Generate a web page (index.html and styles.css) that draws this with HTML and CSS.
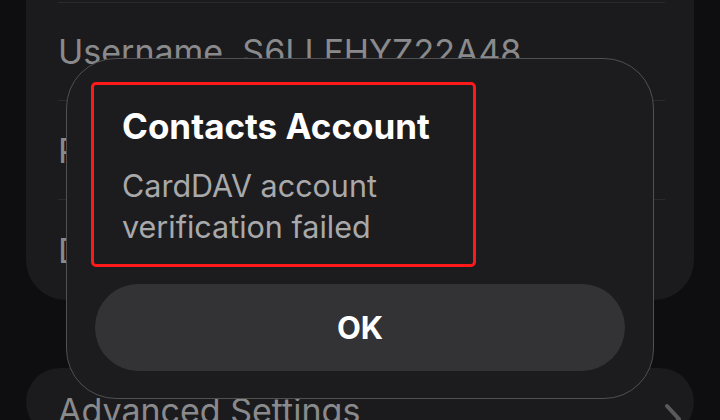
FILE: index.html
```html
<!DOCTYPE html>
<html lang="en">
<head>
<meta charset="utf-8">
<title>Contacts Account</title>
<link rel="stylesheet" href="styles.css">
</head>
<body>
<div class="screen">
  <section class="card card-top">
    <div class="row row-hidden"></div>
    <div class="row"><span class="label">Username&nbsp;&nbsp;S6LLFHYZ22A48</span></div>
    <div class="row"><span class="label">Password</span></div>
    <div class="row"><span class="label">Description</span></div>
  </section>
  <section class="card card-bottom">
    <div class="row row-link">
      <span class="label">Advanced Settings</span>
      <svg class="chevron" width="20" height="34" viewBox="0 0 20 34"><path d="M4 4 L16 17 L4 30" fill="none" stroke="#5a5a5c" stroke-width="4" stroke-linecap="round" stroke-linejoin="round"/></svg>
    </div>
  </section>

  <div class="dialog">
    <div class="dialog-text">
      <h1 class="dialog-title">Contacts Account</h1>
      <p class="dialog-msg">CardDAV account<br>verification failed</p>
    </div>
    <button class="dialog-btn">OK</button>
  </div>
</div>
</body>
</html>
```

FILE: styles.css
```css
* { box-sizing: border-box; }
html, body {
  margin: 0;
  padding: 0;
  width: 720px;
  height: 420px;
  overflow: hidden;
  background: #0e0e10;
  font-family: Inter, "Noto Sans", sans-serif;
}
.screen {
  position: relative;
  width: 720px;
  height: 420px;
  padding: 0 26px;
  display: flex;
  flex-direction: column;
  gap: 68px;
}
.card {
  background: #1b1b1d;
  border-radius: 40px;
  padding: 0 29px 0 32px;
}
.card-top {
  margin-top: -96px;
}
.row {
  height: 99px;
  display: flex;
  align-items: center;
  border-top: 1px solid #2a2a2c;
}
.row-hidden { border-top: none; height: 98px; }
.card-top .row:nth-child(2) { height: 98px; }
.card-top .row:last-child { height: 101px; }
.label {
  font-size: 34px;
  color: #8a8a8c;
  letter-spacing: 0;
  white-space: nowrap;
}
.card-bottom { padding-top: 22px; height: 120px; }
.row-link {
  border-top: none;
  height: auto;
  justify-content: space-between;
  align-items: flex-start;
}
.chevron { margin-top: 12px; margin-right: -18px; }

.dialog {
  position: absolute;
  left: 66px;
  top: 58px;
  width: 588px;
  height: 341px;
  background: #1c1c1e;
  border: 1px solid #505052;
  border-radius: 50px;
  padding: 23px 28px 0 28px;
  display: flex;
  flex-direction: column;
  gap: 17px;
}
.dialog-text {
  margin-left: -4px;
  width: 385px;
  height: 185px;
  border: 3px solid #ff1a1a;
  border-radius: 5px;
  padding: 21px 0 0 28px;
}
.dialog-title {
  margin: 0;
  font-size: 35px;
  line-height: 40px;
  font-weight: 700;
  color: #ffffff;
  letter-spacing: 0;
  white-space: nowrap;
}
.dialog-msg {
  margin: 19px 0 0;
  font-size: 30.5px;
  line-height: 41px;
  color: #a9a9ab;
  white-space: nowrap;
}
.dialog-btn {
  width: 530px;
  height: 87px;
  border: none;
  border-radius: 44px;
  background: #333335;
  color: #ffffff;
  font-family: Inter, "Noto Sans", sans-serif;
  font-size: 31px;
  font-weight: 700;
  padding: 0;
}
```
